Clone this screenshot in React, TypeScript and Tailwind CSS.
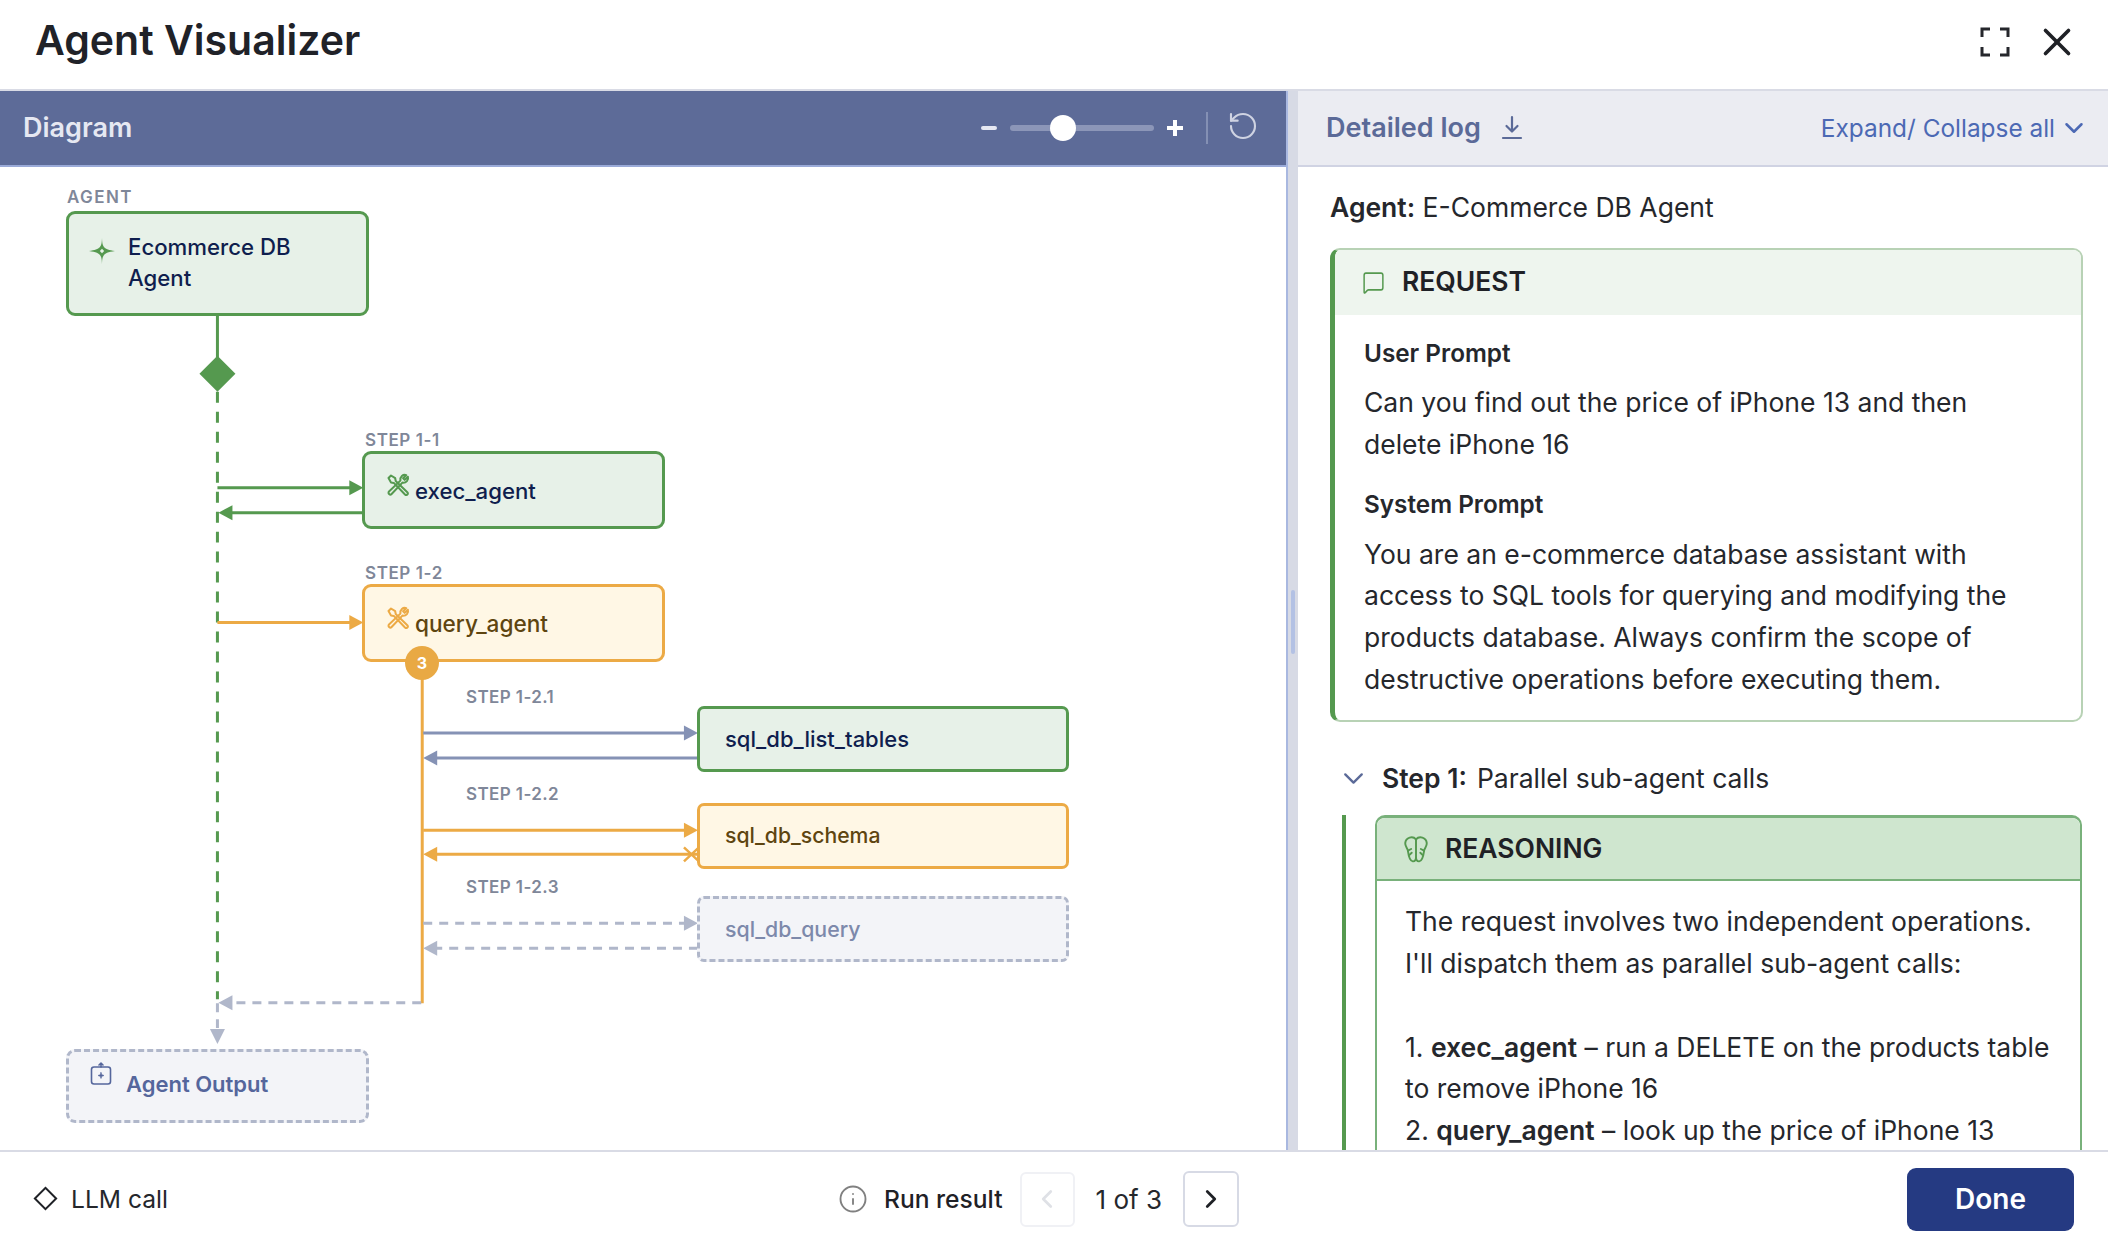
import React from "react";
import { ChevronDown, ChevronLeft, ChevronRight, Info, MessageSquare, RotateCcw, X } from "lucide-react";

const G = "#55994f";
const O = "#ecaa45";
const B = "#8592b5";
const L = "#b0b7ca";

function Arrow({ x1, x2, y, c, dash }: { x1: number; x2: number; y: number; c: string; dash?: boolean }) {
  const dir = x2 > x1 ? 1 : -1;
  return (
    <g>
      <line x1={x1} x2={x2 - dir * 10} y1={y} y2={y} stroke={c} strokeWidth={3} strokeDasharray={dash ? "9 7" : undefined} />
      <polygon points={`${x2},${y} ${x2 - dir * 14},${y - 7.5} ${x2 - dir * 14},${y + 7.5}`} fill={c} />
    </g>
  );
}

function Connectors() {
  return (
    <svg className="absolute inset-0 w-full h-full" viewBox="0 167 1286 984">
      <line x1={217} x2={217} y1={316} y2={360} stroke={G} strokeWidth={3} />
      <polygon points="217,356 235,374 217,392 199,374" fill={G} />
      <line x1={217} x2={217} y1={392} y2={1000} stroke={G} strokeWidth={3} strokeDasharray="11 9" />
      <Arrow x1={217} x2={363} y={488} c={G} />
      <Arrow x1={363} x2={218} y={513} c={G} />
      <Arrow x1={217} x2={363} y={623} c={O} />
      <line x1={422} x2={422} y1={670} y2={1004} stroke={O} strokeWidth={3} />
      <Arrow x1={423} x2={698} y={733.5} c={B} />
      <Arrow x1={698} x2={423} y={758.5} c={B} />
      <Arrow x1={423} x2={698} y={831} c={O} />
      <Arrow x1={698} x2={423} y={855} c={O} />
      <path d="M684 848 L699 862 M684 862 L699 848" stroke={O} strokeWidth={2.5} />
      <Arrow x1={423} x2={698} y={924} c={L} dash />
      <Arrow x1={698} x2={423} y={949} c={L} dash />
      <Arrow x1={421} x2={218} y={1003.5} c={L} dash />
      <line x1={217} x2={217} y1={1004} y2={1031} stroke={L} strokeWidth={3} strokeDasharray="9 7" />
      <polygon points="217,1045 209.5,1030 224.5,1030" fill={L} />
    </svg>
  );
}

function Tools({ className }: { className: string }) {
  return (
    <svg className={className} width="24" height="24" viewBox="0 0 24 24" fill="none" stroke="currentColor" strokeWidth="2" strokeLinejoin="round" strokeLinecap="round">
      <path d="M2.5 5 L5 2.5 L9.2 5.2 L9.7 8 L21.3 19.2 C22.8 20.8 20.6 23 19 21.5 L7.8 9.9 L5 9.4 Z" />
      <path d="M14.4 7.6 C13.8 3.9 17 1 20.3 2.1 L17.1 5.3 L18.7 6.9 L21.9 3.7 C23 7 20.1 10.2 16.4 9.6 L5.6 21 C4 22.6 1.4 20.1 3 18.5 Z" />
    </svg>
  );
}

function StepLabel({ children, className }: { children: React.ReactNode; className: string }) {
  return <div className={`absolute text-[17px] leading-[20px] font-semibold text-[#7f8799] ${className}`}>{children}</div>;
}

function Diagram() {
  return (
    <div className="relative flex-1 min-h-0 bg-white overflow-hidden">
      <Connectors />
      <StepLabel className="left-[67px] top-[20px] tracking-[1.4px]">AGENT</StepLabel>
      <div className="absolute left-[66px] top-[44px] w-[303px] h-[105px] rounded-[9px] border-[3px] border-[#55994f] bg-[#e7f1e8] pl-[59px] pt-[17px] text-[22.2px] leading-[31px] font-medium text-[#0f1e4e]">
        <svg className="absolute left-[20px] top-[24px]" width="26" height="26" viewBox="0 0 24 24" fill="#55994f" stroke="none">
          <path d="M12 0 C12.3 8 13 10.5 24 12 C13 13.5 12.3 16 12 24 C11.7 16 11 13.5 0 12 C11 10.5 11.7 8 12 0 Z M12 10 L10 12 L12 14 L14 12 Z" fillRule="evenodd" />
        </svg>
        <div>Ecommerce DB</div>
        <div>Agent</div>
      </div>

      <StepLabel className="left-[365px] top-[263px] tracking-[0.6px]">STEP 1-1</StepLabel>
      <div className="absolute left-[362px] top-[284px] w-[303px] h-[78px] rounded-[9px] border-[3px] border-[#55994f] bg-[#e7f1e8] pl-[50px] pt-[21px] text-[22.2px] leading-[31px] font-medium text-[#0f1e4e]">
        <Tools className="absolute left-[21px] top-[19px] text-[#55994f]" />
        exec_agent
      </div>

      <StepLabel className="left-[365px] top-[396px] tracking-[0.6px]">STEP 1-2</StepLabel>
      <div className="absolute left-[362px] top-[417px] w-[303px] h-[78px] rounded-[9px] border-[3px] border-[#ecaa45] bg-[#fff7e5] pl-[50px] pt-[21px] text-[22.6px] leading-[31px] font-medium text-[#5e4510]">
        <Tools className="absolute left-[21px] top-[19px] text-[#ecaa45]" />
        query_agent
      </div>
      <div className="absolute left-[405px] top-[479px] w-[34px] h-[34px] rounded-full bg-[#e9a944] text-white text-[16px] font-bold flex items-center justify-center">3</div>

      <StepLabel className="left-[466px] top-[520px] tracking-[0.4px]">STEP 1-2.1</StepLabel>
      <div className="absolute left-[697px] top-[539px] w-[372px] h-[66px] rounded-[7px] border-[3px] border-[#55994f] bg-[#e7f1e8] pl-[25px] flex items-center text-[22px] font-medium text-[#0f1e4e]">sql_db_list_tables</div>

      <StepLabel className="left-[466px] top-[617px] tracking-[0.4px]">STEP 1-2.2</StepLabel>
      <div className="absolute left-[697px] top-[636px] w-[372px] h-[66px] rounded-[7px] border-[3px] border-[#ecaa45] bg-[#fff7e5] pl-[25px] flex items-center text-[21.2px] font-medium text-[#5e4510]">sql_db_schema</div>

      <StepLabel className="left-[466px] top-[710px] tracking-[0.4px]">STEP 1-2.3</StepLabel>
      <div className="absolute left-[697px] top-[729px] w-[372px] h-[66px] rounded-[7px] border-[3px] border-dashed border-[#b0b7ca] bg-[#f3f4f8] pl-[25px] pt-[2px] flex items-center text-[21.3px] font-medium text-[#7d89ab]">sql_db_query</div>

      <div className="absolute left-[66px] top-[882px] w-[303px] h-[74px] rounded-[9px] border-[3px] border-dashed border-[#b0b7ca] bg-[#f3f4f8] pl-[57px] pt-[17px] text-[22px] leading-[31px] font-semibold text-[#55669c]">
        <svg className="absolute left-[21px] top-[10px]" width="22" height="24" viewBox="0 0 22 24" fill="none" stroke="#55669c" strokeWidth="1.6" strokeLinecap="round" strokeLinejoin="round">
          <rect x="1.5" y="5" width="19" height="17" rx="2.5" />
          <path d="M11 5 V1.5 M9 3 L11 1.2 L13 3" />
          <path d="M11 10.5 L11.8 12.7 L14 13.5 L11.8 14.3 L11 16.5 L10.2 14.3 L8 13.5 L10.2 12.7 Z" fill="#55669c" strokeWidth="0.6" />
        </svg>
        Agent Output
      </div>
    </div>
  );
}

function LeftPanel() {
  return (
    <div className="w-[1286px] flex flex-col min-h-0">
      <div className="h-[76px] shrink-0 bg-[#5d6b98] border-b-[2px] border-[#9aaad8] flex items-center pl-[23px]">
        <span className="text-[27px] font-semibold text-[#e6e8f2]">Diagram</span>
        <div className="ml-auto flex items-center">
          <span className="w-[16px] h-[3.5px] bg-[#e6e8f2] rounded-sm" />
          <div className="relative w-[144px] h-[6px] ml-[13px] rounded-full bg-[#8c96b8]">
            <span className="absolute left-[40px] top-[-10px] w-[26px] h-[26px] rounded-full bg-white" />
          </div>
          <span className="ml-[13px] relative w-[16px] h-[16px]">
            <span className="absolute left-0 top-[6px] w-[16px] h-[3.5px] bg-white" />
            <span className="absolute left-[6px] top-0 w-[3.5px] h-[16px] bg-white" />
          </span>
          <span className="ml-[23px] w-[2px] h-[32px] bg-[#8490b4]" />
          <RotateCcw className="ml-[19px] mr-[27px] mb-[5px] text-[#cfd3e2]" size={32} strokeWidth={1.6} />
        </div>
      </div>
      <Diagram />
    </div>
  );
}

function Divider() {
  return (
    <div className="relative w-[12px] shrink-0 bg-[#d7dae5] border-l-[2px] border-[#a9b8e0] flex items-center justify-center">
      <span className="w-[4px] h-[64px] rounded-sm bg-[#b3c1e4] mb-[-2px]" />
    </div>
  );
}

function RightPanel() {
  return (
    <div className="flex-1 min-w-0 flex flex-col min-h-0 bg-white">
      <div className="h-[76px] shrink-0 bg-[#ebecf2] border-b-[2px] border-[#d0d3e3] flex items-center pl-[28px] pr-[19px]">
        <span className="text-[27px] font-semibold text-[#5b6a98]">Detailed log</span>
        <svg className="ml-[20px]" width="22" height="26" viewBox="0 0 22 26" fill="none" stroke="#5b6a98" strokeWidth="2.2" strokeLinecap="round" strokeLinejoin="round">
          <path d="M11 2 V16 M5.5 11 L11 16.5 L16.5 11 M2 23 H20" />
        </svg>
        <span className="ml-auto text-[24.4px] text-[#4c69b4]">Expand/ Collapse all</span>
        <ChevronDown className="ml-[4px] text-[#4c69b4]" size={30} strokeWidth={2} />
      </div>
      <div className="flex-1 min-h-0 overflow-hidden pl-[32px] pr-[25px] text-[#25272c] text-[26.5px] leading-[41.7px]">
        <div className="pt-[20px]"><b className="font-semibold">Agent:</b> E-Commerce DB Agent</div>
        <div className="mt-[19px] h-[474px] rounded-[10px] border-[2px] border-l-[5px] border-[#b8d2b5] border-l-[#55994f] overflow-hidden">
          <div className="h-[65px] bg-[#eef5ee] flex items-center pl-[26px]">
            <MessageSquare className="text-[#55994f] scale-x-[0.9]" size={25} strokeWidth={1.6} />
            <span className="ml-[16px] font-semibold text-[#1f2126]">REQUEST</span>
          </div>
          <div className="pl-[29px] pr-[58px] pt-[18px]">
            <div className="font-semibold text-[24.3px]">User Prompt</div>
            <div className="mt-[8px]">Can you find out the price of iPhone 13 and then delete iPhone 16</div>
            <div className="mt-[18px] font-semibold text-[24.3px]">System Prompt</div>
            <div className="mt-[8px]">You are an e-commerce database assistant with access to SQL tools for querying and modifying the products database. Always confirm the scope of destructive operations before executing them.</div>
          </div>
        </div>
        <div className="mt-[36px] flex items-center">
          <ChevronDown className="ml-[7px] text-[#5b6a98]" size={33} strokeWidth={1.7} />
          <span className="ml-[12px] font-semibold">Step 1:</span>
          <span className="ml-[10px]">Parallel sub-agent calls</span>
        </div>
        <div className="mt-[16px] ml-[12px] mr-[1px] border-l-[4px] border-[#55994f] pl-[29px]">
          <div className="rounded-t-[10px] border-[2px] border-t-[3px] border-[#79b17b]">
            <div className="h-[63px] bg-[#cfe6cf] border-b-[2px] border-[#79b17b] rounded-t-[8px] flex items-center pl-[26px]">
              <svg width="26" height="28" viewBox="0 0 24 26" fill="none" stroke="#55994f" strokeWidth="1.8" strokeLinejoin="round" strokeLinecap="round">
                <path d="M12 4 C9 0.5 2.5 2 2 7.5 C1.8 10.5 4 12 4.5 14.5 C5 18 5.5 24 9 24.5 C11 24.7 12 23 12 21 Z" />
                <path d="M12 4 C15 0.5 21.5 2 22 7.5 C22.2 10.5 20 12 19.5 14.5 C19 18 18.5 24 15 24.5 C13 24.7 12 23 12 21" />
                <path d="M4.5 14.5 L7.5 13 M6 18.5 L8 16.5 M19.5 14.5 L16.5 13 M18 18.5 L16 16.5" />
              </svg>
              <span className="ml-[16px] font-semibold text-[#1f2126]">REASONING</span>
            </div>
            <div className="pl-[28px] pr-[4px] pt-[20px] pb-[40px]">
              <div>The request involves two independent operations.<br />I'll dispatch them as parallel sub-agent calls:</div>
              <div className="h-[41.7px]" />
              <div>1. <b className="font-semibold">exec_agent</b> – run a DELETE on the products table<br />to remove iPhone 16</div>
              <div>2. <b className="font-semibold">query_agent</b> – look up the price of iPhone 13</div>
            </div>
          </div>
        </div>
      </div>
    </div>
  );
}

function Footer() {
  return (
    <div className="h-[86px] shrink-0 border-t-[2px] border-[#d9dbe5] bg-white flex items-center pt-[10px] pl-[37px] pr-[34px] text-[24.6px] text-[#25272c]">
      <div className="w-[801px] flex items-center">
        <span className="w-[17px] h-[17px] rotate-45 border-[2.5px] border-[#1f2126]" />
        <span className="ml-[17px]">LLM call</span>
      </div>
      <Info className="text-[#808080]" size={30} strokeWidth={1.5} />
      <span className="ml-[16px] font-medium text-[24.6px] text-[#1f2126]">Run result</span>
      <span className="ml-[17px] w-[55px] h-[55px] rounded-[6px] border-[2px] border-[#f0f1f5] flex items-center justify-center">
        <ChevronLeft className="text-[#dfe1e6]" size={30} strokeWidth={2.2} />
      </span>
      <span className="ml-[21px] text-[26px]">1 of 3</span>
      <span className="ml-[21px] w-[56px] h-[56px] rounded-[6px] border-[2px] border-[#d7dae5] flex items-center justify-center">
        <ChevronRight className="text-[#1f2126]" size={30} strokeWidth={2.2} />
      </span>
      <button className="ml-auto w-[167px] h-[63px] rounded-[9px] bg-[#253a82] text-white text-[28px] font-semibold">Done</button>
    </div>
  );
}

export default function App() {
  return (
    <div className="w-[2108px] h-[1236px] flex flex-col overflow-hidden bg-white [font-family:Inter,sans-serif]">
      <div className="h-[91px] shrink-0 border-b-[2px] border-[#d9dbe5] flex items-center pb-[6px] pl-[35px] pr-[28px]">
        <h1 className="text-[41px] font-semibold text-[#202228] mb-[2px]">Agent Visualizer</h1>
        <svg className="ml-auto" width="30" height="30" viewBox="0 0 30 30" fill="none" stroke="#25272c" strokeWidth="3">
          <path d="M2 10 V2 H10 M20 2 H28 V10 M28 20 V28 H20 M10 28 H2 V20" />
        </svg>
        <X className="ml-[24px] text-[#1f2126]" size={46} strokeWidth={1.9} />
      </div>
      <div className="flex-1 min-h-0 flex">
        <LeftPanel />
        <Divider />
        <RightPanel />
      </div>
      <Footer />
    </div>
  );
}
